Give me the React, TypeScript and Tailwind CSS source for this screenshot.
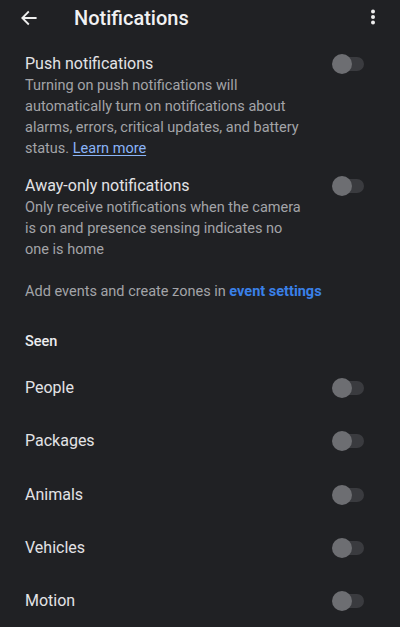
import React from "react";

function Toggle() {
  return (
    <div className="relative w-[32px] h-[20px] shrink-0 flex items-center">
      <div className="absolute left-[4px] right-0 h-[14px] rounded-full bg-[#3a3b3f]" />
      <div className="absolute left-0 top-0 w-[20px] h-[20px] rounded-full bg-[#6d6e72]" />
    </div>
  );
}

function Row({ label }: { label: string }) {
  return (
    <div className="h-[53.3px] flex items-center justify-between">
      <span className="text-[16px] leading-[22px] text-[#e3e3e6]">{label}</span>
      <Toggle />
    </div>
  );
}

export default function App() {
  return (
    <div
      className="w-[400px] h-[627px] overflow-hidden bg-[#202124] text-[#e3e3e6]"
      style={{ fontFamily: "Roboto, 'Noto Sans', sans-serif" }}
    >
      <div className="h-[36px] flex items-center relative">
        <svg className="ml-[19px]" width="20" height="20" viewBox="0 0 24 24" fill="none">
          <path d="M20 12H4.5M11 5l-7 7 7 7" stroke="#eeeeee" strokeWidth="2.2" strokeLinecap="square" />
        </svg>
        <span className="ml-[35px] text-[20px] font-medium text-[#f1f1f3] leading-none">Notifications</span>
        <svg className="absolute left-[370px] top-[9px]" width="6" height="16" viewBox="0 0 6 16">
          <circle cx="3" cy="2.5" r="2" fill="#eeeeee" />
          <circle cx="3" cy="8" r="2" fill="#eeeeee" />
          <circle cx="3" cy="13.5" r="2" fill="#eeeeee" />
        </svg>
      </div>
      <div className="pl-[25px] pr-[36px]">
        <div className="mt-[17px]">
          <div className="flex items-center justify-between h-[22px]">
            <span className="text-[16px] leading-[22px]">Push notifications</span>
            <Toggle />
          </div>
          <p className="text-[14.5px] leading-[21px] text-[#a3a4a8] w-[282px]">
            Turning on push notifications will automatically turn on notifications about alarms, errors, critical
            updates, and battery status. <a className="text-[#8ab4f8] underline underline-offset-2">Learn more</a>
          </p>
        </div>
        <div className="mt-[16px]">
          <div className="flex items-center justify-between h-[22px]">
            <span className="text-[16px] leading-[22px]">Away-only notifications</span>
            <Toggle />
          </div>
          <p className="text-[14.5px] leading-[21px] text-[#a3a4a8] w-[282px]">
            Only receive notifications when the camera is on and presence sensing indicates no one is home
          </p>
        </div>
        <p className="mt-[20.5px] text-[14.5px] leading-[21px] text-[#a3a4a8]">
          Add events and create zones in <a className="font-bold text-[#3a80e8]">event settings</a>
        </p>
        <div className="mt-[30.5px] text-[14.5px] leading-[20px] font-medium text-[#ececef]">Seen</div>
        <div className="mt-[9.5px]">
          <Row label="People" />
          <Row label="Packages" />
          <Row label="Animals" />
          <Row label="Vehicles" />
          <Row label="Motion" />
        </div>
      </div>
    </div>
  );
}
